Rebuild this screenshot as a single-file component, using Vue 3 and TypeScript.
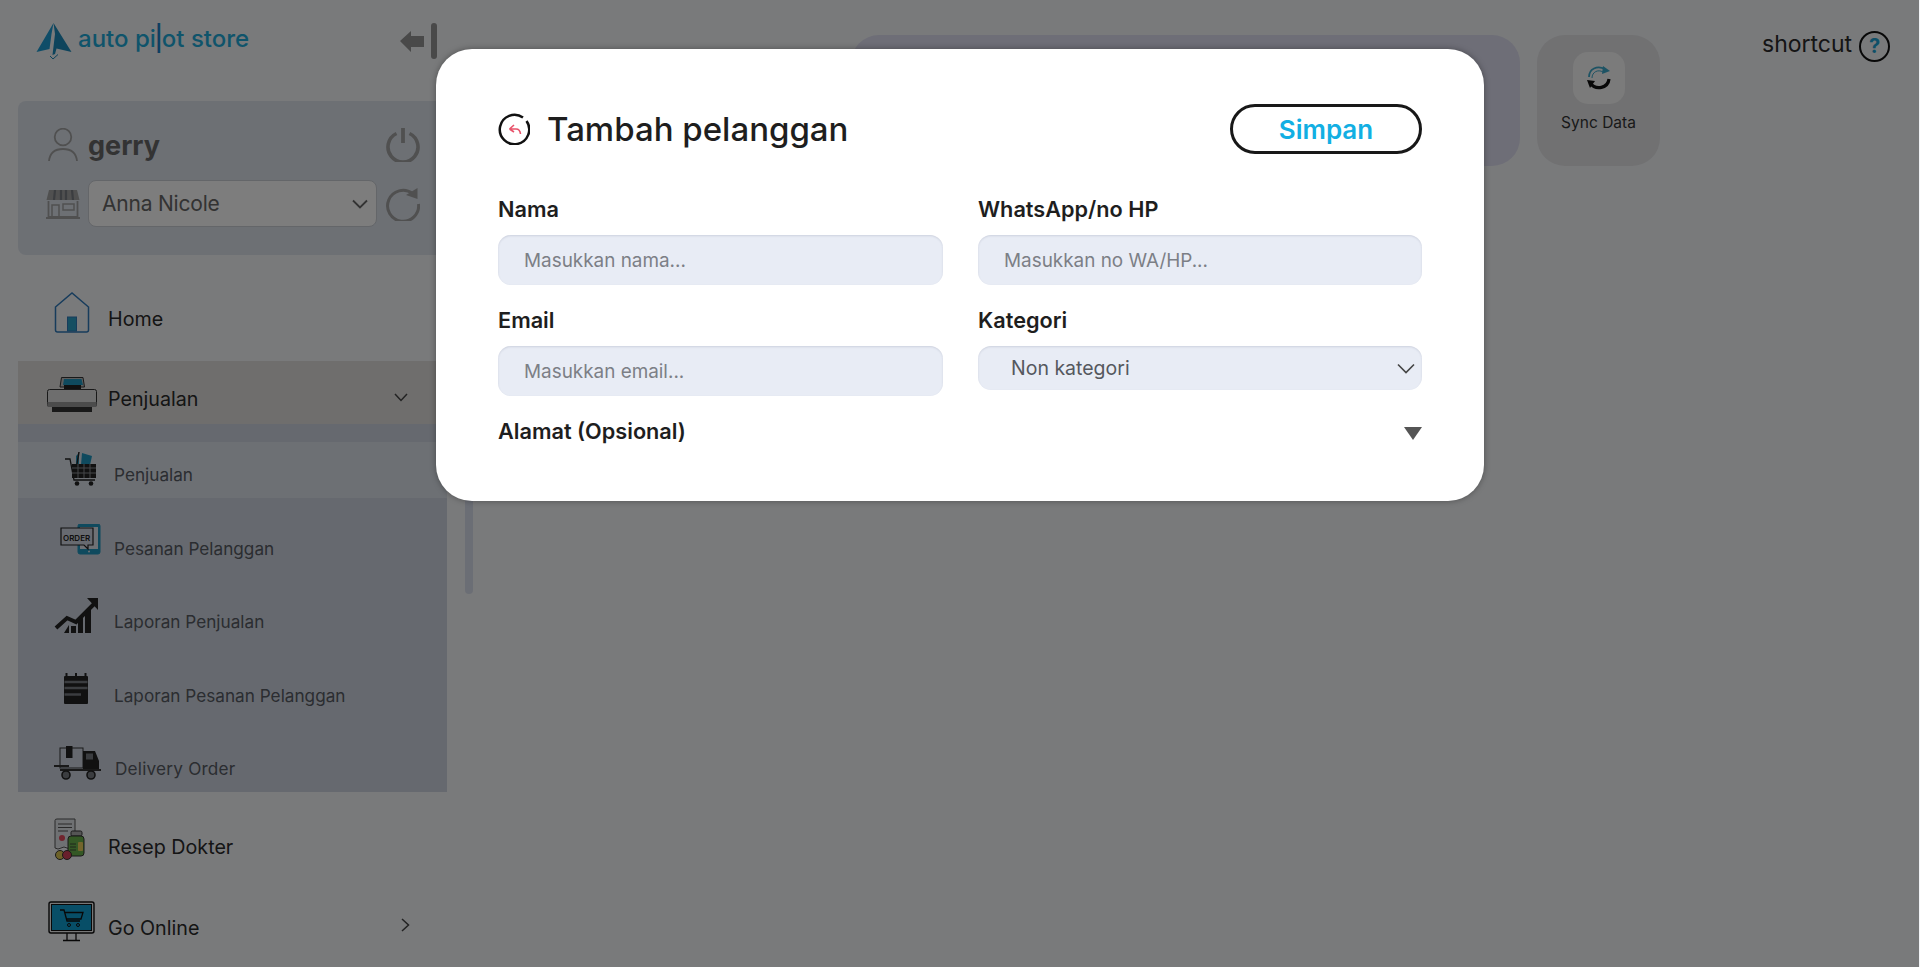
<script setup lang="ts">
interface SubItem { label: string; icon: string; tweak?: boolean }
const subItems: SubItem[] = [
  { label: 'Penjualan', icon: 'cart' },
  { label: 'Pesanan Pelanggan', icon: 'order' },
  { label: 'Laporan Penjualan', icon: 'chart' },
  { label: 'Laporan Pesanan Pelanggan', icon: 'note' },
  { label: 'Delivery Order', icon: 'truck', tweak: true },
]
</script>

<template>
  <div class="page">
    <aside class="sidebar">
      <div class="brand">
        <div class="logo">
          <svg class="logo-mark" width="36" height="40" viewBox="0 0 36 40">
            <path d="M17.500 1 L0.500 30 L13.500 27 L15.500 12 Z" fill="#1f9bd0" />
            <path d="M17.500 1 L35.500 30 L20.500 26.500 L19 32 L16.500 33 L19 12 Z" fill="#1c88b8" />
            <path d="M14 34 L17 37 L22 32.500" fill="none" stroke="#1c88b8" stroke-width="1" />
          </svg>
          <span class="logo-text">auto pi<span class="logo-l">l</span>ot store</span>
        </div>
        <svg class="collapse" width="37" height="36" viewBox="0 0 37 36">
          <path d="M0 18 L11 8 V13 H24 V24 H11 V29 Z" fill="#929292" />
          <rect x="31" y="0" width="6" height="36" rx="3" fill="#929292" />
        </svg>
      </div>

      <div class="usercard">
        <div class="urow">
          <svg class="ucell" width="30" height="34" viewBox="0 0 30 34">
            <circle cx="15" cy="9" r="8.300" fill="none" stroke="#a0a0a0" stroke-width="1.800" />
            <path d="M1 33 C2 24 8 21 15 21 S28 24 29 33" fill="none" stroke="#a0a0a0" stroke-width="1.800" />
          </svg>
          <span class="uname">gerry</span>
          <svg class="uaction" width="34" height="34" viewBox="0 0 34 34">
            <path d="M10.500 5.500 A15 15 0 1 0 23.500 5.500" fill="none" stroke="#a0a0a0" stroke-width="3.600" />
            <path d="M17 0 V15" fill="none" stroke="#a0a0a0" stroke-width="3.800" />
          </svg>
        </div>
        <div class="urow urow-store">
          <svg class="ucell" width="34" height="30" viewBox="0 0 34 30">
            <path d="M3 1 H31 L33.500 11 H0.500 Z" fill="#a0a0a0" />
            <path d="M9 1 L8 11 M15 1 V11 M20 1 V11 M26 1 L27 11" stroke="#767a80" stroke-width="2.200" />
            <path d="M2.500 12 V28 H31.500 V12" fill="none" stroke="#a0a0a0" stroke-width="1.800" />
            <path d="M6 28 V16 H13 V28" fill="none" stroke="#a0a0a0" stroke-width="1.500" />
            <rect x="17" y="15" width="11" height="6" fill="none" stroke="#a0a0a0" stroke-width="1.500" />
            <path d="M0 29 H34" stroke="#a0a0a0" stroke-width="2.200" />
          </svg>
          <div class="store-select">
            <span>Anna Nicole</span>
            <svg width="16" height="10" viewBox="0 0 16 10">
              <path d="M1 1.500 L8 8.500 L15 1.500" fill="none" stroke="#666" stroke-width="1.800" />
            </svg>
          </div>
          <svg class="uaction" width="34" height="34" viewBox="0 0 34 34">
            <path d="M26.500 6.500 A15.500 15.500 0 1 0 32.500 17" fill="none" stroke="#a0a0a0" stroke-width="3" />
            <path d="M20 8 L31.500 1 V12 Z" fill="#a0a0a0" />
          </svg>
        </div>
      </div>

      <nav class="nav">
        <a class="row row-home">
          <svg class="row-icon" width="64" height="44" viewBox="0 0 64 44">
            <path d="M15.500 16 L32 2 L48.500 16 V39 Q48.500 41 46.500 41 H17.500 Q15.500 41 15.500 39 Z" fill="none" stroke="#2e78b8" stroke-width="1.500" />
            <rect x="27.500" y="26" width="9" height="14" fill="#2a9fc4" stroke="#2e78b8" stroke-width="1" />
          </svg>
          <span>Home</span>
        </a>

        <a class="row row-active">
          <svg class="row-icon" width="64" height="44" viewBox="0 0 64 44">
            <path d="M20 11 L21.500 1.500 H43 L44.500 11 Z" fill="#bbb" stroke="#333" stroke-width="1" />
            <path d="M23 9 L24 3 H41.500 L43 9 Z" fill="#1e94bc" />
            <rect x="24" y="9" width="17" height="5" fill="#222" />
            <rect x="7.500" y="13.500" width="49" height="17" rx="2" fill="#dcdcdc" stroke="#333" stroke-width="1" />
            <rect x="7.500" y="26" width="49" height="5" fill="#999" />
            <rect x="12" y="31" width="40" height="5" fill="#333" />
          </svg>
          <span class="row-label-low">Penjualan</span>
          <svg class="chev chev-down" width="14" height="9" viewBox="0 0 14 9">
            <path d="M1 1 L7 7.500 L13 1" fill="none" stroke="#444" stroke-width="1.500" />
          </svg>
        </a>

        <div class="sublist">
          <a v-for="(item, i) in subItems" :key="item.label" class="subrow" :class="{ 'subrow-first': i === 0 }">
            <svg class="sub-icon" width="60" height="44" viewBox="0 0 60 44">
              <g v-if="item.icon === 'cart'">
                <path d="M15 9 H20 L24 30 H45" fill="none" stroke="#222" stroke-width="1.300" />
                <path d="M26 6 L29 3 L29 14 H26 Z" fill="#1e94bc" />
                <path d="M32 3 L42 6 L40 15 H31 Z" fill="#1e94bc" />
                <path d="M29 2 L27 14" stroke="#222" stroke-width="1.500" />
                <rect x="22" y="14" width="24" height="14" fill="#222" />
                <path d="M22 18 H46 M22 23 H46 M28 14 V28 M34 14 V28 M40 14 V28" stroke="#8a8e94" stroke-width="1" />
                <circle cx="27" cy="33.500" r="2.300" fill="#222" />
                <circle cx="41" cy="33.500" r="2.300" fill="#222" />
              </g>
              <g v-else-if="item.icon === 'order'">
                <rect x="28" y="0" width="22" height="30" rx="2" fill="#1e94bc" stroke="#1e94bc" />
                <rect x="30" y="3" width="18" height="22" fill="#dde2ea" />
                <circle cx="39" cy="27.500" r="1" fill="#dde2ea" />
                <path d="M11 4 H43 V21 H38 V25 L34 21 H11 Z" fill="#cfd5e0" stroke="#222" stroke-width="1.200" />
                <text x="13" y="16.500" class="order-text">ORDER</text>
              </g>
              <g v-else-if="item.icon === 'chart'">
                <path d="M6 31 L17 21 L26 25 L44 7" fill="none" stroke="#222" stroke-width="4" />
                <path d="M37 1 H48 V13 Z" fill="#222" />
                <path d="M14 36 L19 28 V36 Z M21 36 V29 H26 V36 Z M28 36 V24 L33 19 V36 Z M35 36 V17 L41 12 V36 Z" fill="#222" />
              </g>
              <g v-else-if="item.icon === 'note'">
                <rect x="14" y="5" width="24" height="28" rx="1" fill="#222" />
                <path d="M16.500 2 V7 M26 2 V7 M35.500 2 V7" stroke="#222" stroke-width="2" />
                <path d="M14.500 11 H37.500 M14.500 17 H37.500 M14.500 23.500 H31" stroke="#767a80" stroke-width="2.400" />
              </g>
              <g v-else>
                <rect x="10" y="4" width="23" height="20" fill="none" stroke="#333" stroke-width="1" />
                <rect x="16" y="2" width="6.500" height="12" fill="#222" />
                <path d="M33 7 H45 L49 17 V27 H33 Z" fill="#222" />
                <rect x="36" y="9.500" width="7" height="6" fill="#767a80" />
                <path d="M4 22 H19 M10 26 H51" stroke="#333" stroke-width="2" />
                <circle cx="16" cy="31" r="4" fill="#767a80" stroke="#222" stroke-width="1.600" />
                <circle cx="41" cy="31" r="4" fill="#767a80" stroke="#222" stroke-width="1.600" />
              </g>
            </svg>
            <span class="sub-label" :class="{ 'sub-label-nudge': item.tweak }">{{ item.label }}</span>
          </a>
        </div>

        <a class="row row-gap">
          <svg class="row-icon" width="64" height="44" viewBox="0 0 64 44">
            <path d="M15 30 V2.500 Q15 1 17 1 H35 V27" fill="#dfe2e6" stroke="#555" stroke-width="1" />
            <path d="M18 6 H32 M18 9.500 H32 M18 13 H28" stroke="#555" stroke-width="1" />
            <circle cx="22" cy="20" r="3" fill="#e34a5c" />
            <path d="M15 30 Q18 32 21 30 T27 30 T33 30" fill="none" stroke="#555" stroke-width="1" />
            <rect x="31" y="13" width="11" height="5" rx="1.500" fill="#aaa" stroke="#333" />
            <rect x="28" y="18" width="16" height="20" rx="3" fill="#68b04a" stroke="#333" />
            <rect x="38" y="24" width="5" height="9" rx="1" fill="#e8cc5a" />
            <path d="M30 26 H36 M30 29 H36 M30 32 H36" stroke="#333" stroke-width="0.800" />
            <circle cx="20" cy="37" r="4.500" fill="#dbc452" stroke="#333" />
            <circle cx="27" cy="37" r="4.500" fill="#d04058" stroke="#333" />
          </svg>
          <span>Resep Dokter</span>
        </a>

        <a class="row row-online">
          <svg class="row-icon" width="64" height="44" viewBox="0 0 64 44">
            <rect x="9" y="2" width="45" height="31" rx="2" fill="#eee" stroke="#111" stroke-width="1.400" />
            <rect x="11.500" y="4.500" width="40" height="26" fill="#0e9ccf" stroke="#111" stroke-width="1" />
            <path d="M20 10 H24 L27 21 H40 M25 12.500 H43 L41 19 H26.500" fill="none" stroke="#111" stroke-width="1.300" />
            <circle cx="29" cy="25" r="1.500" fill="none" stroke="#111" />
            <circle cx="38" cy="25" r="1.500" fill="none" stroke="#111" />
            <path d="M27 33 V40 M36 33 V40 M23 40.500 H40" stroke="#111" stroke-width="1.300" />
          </svg>
          <span>Go Online</span>
          <svg class="chev chev-right" width="9" height="14" viewBox="0 0 9 14">
            <path d="M1 1 L7.500 7 L1 13" fill="none" stroke="#444" stroke-width="1.500" />
          </svg>
        </a>
      </nav>

      <div class="thumb"></div>
    </aside>

    <main class="main">
      <div class="tools-card"></div>
      <div class="sync-card">
        <div class="sync-box">
          <svg width="24" height="26" viewBox="0 0 24 26">
            <path d="M2 12 C2 4 10 0 18 4" fill="none" stroke="#3aa6c8" stroke-width="1.800" />
            <path d="M5 13 C5 7 11 4 16 7" fill="none" stroke="#3aa6c8" stroke-width="1" />
            <path d="M16 1 L23 6 L15 9 Z" fill="#3aa6c8" />
            <path d="M22 14 C21 23 9 26 3 18" fill="none" stroke="#111" stroke-width="3.200" />
            <path d="M0 15 L8 16 L3 23 Z" fill="#111" />
          </svg>
        </div>
        <span class="sync-text">Sync Data</span>
      </div>
      <div class="shortcut">
        <span>shortcut</span>
        <span class="help">?</span>
      </div>
    </main>

    <div class="overlay">
      <section class="modal">
        <header class="modal-head">
          <div class="modal-title">
            <svg width="32" height="32" viewBox="0 0 32 32">
              <path d="M25 4.500 A14.700 14.700 0 1 0 28.500 8" fill="none" stroke="#111" stroke-width="2.500" />
              <path d="M11.500 16 L16 12 M11.500 16 L16 19 M11.500 16 H18 Q22 16 22.500 21" fill="none" stroke="#e8526a" stroke-width="1.600" />
            </svg>
            <h1>Tambah pelanggan</h1>
          </div>
          <button class="save" type="button">Simpan</button>
        </header>
        <div class="form">
          <div class="field">
            <label>Nama</label>
            <input type="text" placeholder="Masukkan nama..." />
          </div>
          <div class="field">
            <label>WhatsApp/no HP</label>
            <input type="text" placeholder="Masukkan no WA/HP..." />
          </div>
          <div class="field">
            <label>Email</label>
            <input type="text" placeholder="Masukkan email..." />
          </div>
          <div class="field">
            <label>Kategori</label>
            <div class="cat-select">
              <span>Non kategori</span>
              <svg width="18" height="11" viewBox="0 0 18 11">
                <path d="M1 1.500 L9 9.500 L17 1.500" fill="none" stroke="#444" stroke-width="1.600" />
              </svg>
            </div>
          </div>
        </div>
        <div class="address">
          <span>Alamat (Opsional)</span>
          <i class="tri"></i>
        </div>
      </section>
    </div>
  </div>
</template>

<style>
html, body { margin: 0; padding: 0; }
</style>

<style scoped>
.page {
  display: flex;
  height: 967px;
  overflow: hidden;
  position: relative;
  background: #f2f4f7;
  font-family: Inter, Roboto, sans-serif;
  color: #222;
}
.sidebar {
  position: relative;
  width: 473px;
  flex: none;
  padding-left: 18px;
  box-sizing: border-box;
}
.brand {
  height: 101px;
  display: flex;
  justify-content: space-between;
  padding: 22px 36px 0 18px;
  box-sizing: border-box;
  align-items: flex-start;
}
.logo { display: flex; align-items: flex-start; gap: 6px; }
.logo-text {
  font-size: 24px;
  line-height: 34px;
  font-weight: 500;
  color: #1ea8d6;
}
.logo-l {
  display: inline-block;
  transform: scaleY(1.700);
  color: #1c7fc0;
}
.collapse { margin-top: 1px; }
.usercard {
  width: 429px;
  height: 154px;
  background: #dae0e9;
  border-radius: 8px;
  padding: 27px 27px 0 28px;
  box-sizing: border-box;
}
.urow { display: flex; align-items: center; height: 34px; }
.urow-store { height: 47px; margin-top: 18px; }
.ucell { flex: none; width: 34px; margin-right: 8px; }
.uname { font-size: 27px; font-weight: 700; color: #666; flex: 1; }
.uaction { flex: none; margin-left: auto; }
.store-select {
  width: 289px;
  height: 47px;
  box-sizing: border-box;
  background: #fafafa;
  border: 1px solid #c8ccd2;
  border-radius: 8px;
  display: flex;
  align-items: center;
  justify-content: space-between;
  padding: 0 8px 0 13px;
  font-size: 21px;
  letter-spacing: -0.2px;
  color: #666;
}
.nav { margin-top: 24px; width: 429px; }
.row {
  height: 82px;
  display: flex;
  align-items: center;
  padding-left: 22px;
  box-sizing: border-box;
  font-size: 19.700px;
  color: #2a2a2a;
  position: relative;
}
.row-home span, .row-online > span { padding-bottom: 2px; }
.row-icon { flex: none; margin-right: 4px; margin-bottom: 14px; }
.row-active {
  height: 63px;
  background: #dedddb;
}
.row-active .row-icon { margin-bottom: 0; margin-top: 11px; }
.row-label-low { padding-top: 12px; }
.row-gap { margin-top: 14px; }
.chev { position: absolute; }
.chev-down { left: 376px; top: 32px; }
.chev-right { left: 383px; top: 30px; }
.sublist {
  height: 368px;
  box-sizing: border-box;
  padding-top: 18px;
  background: #ccd3df;
  display: flex;
  flex-direction: column;
  gap: 17.500px;
  overflow: hidden;
}
.subrow {
  flex: none;
  height: 56px;
  display: flex;
  align-items: center;
  padding-left: 32px;
  font-size: 17.200px;
  color: #565a62;
}
.subrow-first {
  background: #dae0e9;
}
.sub-icon { flex: none; margin-right: 4px; margin-top: 4px; }
.sub-label { padding-top: 9px; }
.sub-label-nudge { margin-left: 1px; letter-spacing: 0.2px; }
.order-text { font-size: 8px; font-weight: 600; font-family: Inter, sans-serif; fill: #222; }
.thumb {
  position: absolute;
  left: 465px;
  top: 300px;
  width: 8px;
  height: 294px;
  border-radius: 4px;
  background: #d6dcea;
}
.main {
  flex: 1;
  display: flex;
  align-items: flex-start;
  padding: 35px 0 0 378px;
  box-sizing: border-box;
}
.tools-card {
  width: 669px;
  height: 131px;
  border-radius: 28px;
  background: #dcdcee;
}
.sync-card {
  width: 123px;
  height: 131px;
  margin-left: 17px;
  border-radius: 28px;
  background: #e2e2e4;
  display: flex;
  flex-direction: column;
  align-items: center;
  padding-top: 17px;
  box-sizing: border-box;
}
.sync-box {
  width: 52px;
  height: 52px;
  border-radius: 15px;
  background: #f6f6f6;
  display: flex;
  align-items: center;
  justify-content: center;
}
.sync-text { margin-top: 8px; font-size: 15.500px; color: #333; line-height: 22px; }
.shortcut {
  margin-left: 102px;
  display: flex;
  align-items: center;
  gap: 7px;
  margin-top: -13px;
  font-size: 23px;
  color: #2a2a2a;
  height: 44px;
}
.help {
  width: 27px;
  height: 27px;
  border: 2.500px solid #111;
  border-radius: 50%;
  display: flex;
  align-items: center;
  justify-content: center;
  font-weight: 700;
  font-size: 20px;
  color: #1ea0d0;
  margin-top: 4px;
}
.overlay {
  position: absolute;
  inset: 0 1px 0 0;
  background: rgba(0, 0, 0, 0.5);
}
.modal {
  position: absolute;
  left: 436px;
  top: 49px;
  width: 1048px;
  height: 452px;
  box-sizing: border-box;
  padding: 55px 62px 0;
  background: #fff;
  border-radius: 36px;
  box-shadow: 0 0 6px rgba(0, 0, 0, 0.35);
}
.modal-head {
  display: flex;
  justify-content: space-between;
  align-items: center;
  height: 50px;
  margin-bottom: 36px;
}
.modal-title { display: flex; align-items: center; gap: 17px; }
.modal-title h1 {
  margin: 0;
  font-size: 33px;
  font-weight: 500;
  color: #1e1e1e;
}
.save {
  width: 192px;
  height: 50px;
  box-sizing: border-box;
  background: #fff;
  border: 3px solid #181818;
  border-radius: 25px;
  font: 600 26px Inter, sans-serif;
  color: #12afe3;
  padding: 0;
}
.form {
  display: grid;
  grid-template-columns: 445px 444px;
  column-gap: 35px;
  row-gap: 16px;
}
.field { height: 95px; }
.field label {
  display: block;
  height: 36px;
  line-height: 38px;
  margin-bottom: 9px;
  font-size: 21.700px;
  font-weight: 600;
  color: #1e1e1e;
}
.field input {
  display: block;
  width: 100%;
  height: 50px;
  box-sizing: border-box;
  border: 0;
  outline: 0;
  border-radius: 13px;
  padding: 0 26px;
  background: #e8ecf5;
  box-shadow: inset 0 1px 2px rgba(60, 70, 100, 0.15);
  font: 400 18.900px Inter, sans-serif;
}
.field input::placeholder { color: #7c7f86; opacity: 1; }
.cat-select {
  height: 44px;
  border-radius: 13px;
  background: #e8ecf5;
  box-shadow: inset 0 1px 2px rgba(60, 70, 100, 0.15);
  display: flex;
  align-items: center;
  justify-content: space-between;
  padding: 0 7px 0 33px;
  font-size: 19.500px;
  color: #55585e;
}
.address {
  margin-top: 17px;
  height: 36px;
  display: flex;
  align-items: center;
  justify-content: space-between;
  font-size: 21.700px;
  font-weight: 600;
  color: #1e1e1e;
}
.tri {
  width: 0;
  height: 0;
  border-left: 9px solid transparent;
  border-right: 9px solid transparent;
  border-top: 13px solid #555;
  margin-top: 4px;
}
</style>
